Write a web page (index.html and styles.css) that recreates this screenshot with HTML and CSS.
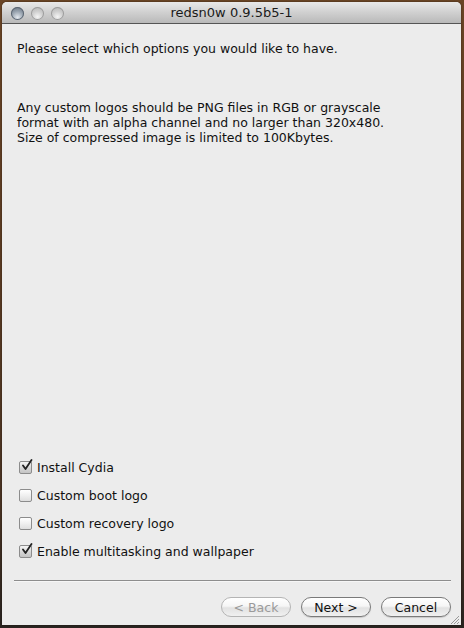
FILE: index.html
```html
<!DOCTYPE html>
<html>
<head>
<meta charset="utf-8">
<link rel="stylesheet" href="styles.css">
</head>
<body>
<div class="window">
  <div class="titlebar">
    <div class="lights">
      <span class="light active"></span>
      <span class="light"></span>
      <span class="light"></span>
    </div>
    <div class="title">redsn0w 0.9.5b5-1</div>
  </div>
  <div class="content">
    <p class="intro">Please select which options you would like to have.</p>
    <p class="info">Any custom logos should be PNG files in RGB or grayscale<br>format with an alpha channel and no larger than 320x480.<br>Size of compressed image is limited to 100Kbytes.</p>
    <div class="options">
      <label class="option"><span class="box checked"><svg viewBox="0 0 13 13" width="13" height="13"><path d="M3 6.5 L5.5 10 L11.5 1" fill="none" stroke="#222" stroke-width="1.8" stroke-linecap="round" stroke-linejoin="round"/></svg></span>Install Cydia</label>
      <label class="option"><span class="box"></span>Custom boot logo</label>
      <label class="option"><span class="box"></span>Custom recovery logo</label>
      <label class="option"><span class="box checked"><svg viewBox="0 0 13 13" width="13" height="13"><path d="M3 6.5 L5.5 10 L11.5 1" fill="none" stroke="#222" stroke-width="1.8" stroke-linecap="round" stroke-linejoin="round"/></svg></span>Enable multitasking and wallpaper</label>
    </div>
    <div class="separator"></div>
    <div class="buttons">
      <button class="btn disabled">&lt; Back</button>
      <button class="btn">Next &gt;</button>
      <button class="btn">Cancel</button>
    </div>
  </div>
  <div class="grip"><svg width="11" height="11" viewBox="0 0 11 11"><path d="M10 2 L2 10 M10 5 L5 10 M10 8 L8 10" stroke="#999" stroke-width="1"/></svg></div>
</div>
</body>
</html>
```
FILE: styles.css
```css
html, body {
  margin: 0;
  padding: 0;
}
body {
  width: 464px;
  height: 628px;
  overflow: hidden;
  background: linear-gradient(180deg, #6a4526 0%, #5b3b22 40%, #4a3423 80%, #2a2420 100%);
  font-family: "DejaVu Sans", "Liberation Sans", sans-serif;
  font-size: 12.5px;
  color: #111;
}
.window {
  position: relative;
  margin: 2px 3px 0 2px;
  width: 459px;
  height: 623px;
  background: #ececec;
  border-radius: 5px 5px 0 0;
  display: flex;
  flex-direction: column;
  overflow: hidden;
  box-shadow: 0 0 2px rgba(0,0,0,0.5);
}
.titlebar {
  height: 21px;
  flex: none;
  background: linear-gradient(180deg, #e9e9e9 0%, #d2d2d2 45%, #b9b9b9 100%);
  border-bottom: 1px solid #555;
  display: flex;
  align-items: center;
  position: relative;
}
.lights {
  display: flex;
  gap: 7px;
  padding-left: 9px;
  padding-top: 1px;
}
.light {
  width: 13px;
  height: 13px;
  border-radius: 50%;
  background: radial-gradient(circle at 50% 75%, #f4f4f4 0%, #d0d0d0 45%, #b0b0b0 100%);
  box-shadow: inset 0 0 0 1px #9c9c9c;
}
.light.active {
  background: radial-gradient(circle at 50% 80%, #e3e8ee 0%, #97a2ae 50%, #5f6a78 100%);
  box-shadow: inset 0 0 0 1px #5a6470;
}
.title {
  position: absolute;
  left: 0;
  right: 0;
  top: 3px;
  text-align: center;
  font-size: 13px;
  color: #1a1a1a;
}
.content {
  flex: 1;
  display: flex;
  flex-direction: column;
  padding: 0 10px 0 15px;
}
.intro {
  margin: 17px 0 0 0;
  line-height: 15px;
}
.info {
  margin: 44px 0 0 0;
  line-height: 15px;
}
.options {
  margin-top: auto;
  display: flex;
  flex-direction: column;
  gap: 14px;
  padding-left: 2px;
}
.option {
  display: flex;
  align-items: center;
  height: 14px;
  gap: 5px;
}
.box {
  width: 13px;
  height: 13px;
  box-sizing: border-box;
  border: 1px solid #8c8c8c;
  border-radius: 2px;
  background: linear-gradient(180deg, #ffffff 0%, #f0f0f0 50%, #dedede 100%);
  position: relative;
}
.box.checked {
  background: linear-gradient(180deg, #f4f4f4 0%, #d4d4d4 60%, #c4c4c4 100%);
}
.box svg {
  position: absolute;
  left: 0;
  top: -3px;
}
.separator {
  margin: 22px 0 0 -3px;
  height: 1px;
  background: #8d8d8d;
  border-bottom: 1px solid #f6f6f6;
}
.buttons {
  display: flex;
  justify-content: flex-end;
  gap: 10px;
  margin-top: 15px;
  margin-bottom: 8px;
}
.btn {
  width: 70px;
  height: 20px;
  padding: 0;
  font-family: inherit;
  font-size: 12.5px;
  color: #111;
  border: 1px solid #7a7a7a;
  border-radius: 10px;
  background: linear-gradient(180deg, #ffffff 0%, #f6f6f6 45%, #e2e2e2 55%, #f0f0f0 100%);
  box-shadow: 0 1px 1px rgba(0,0,0,0.15);
}
.btn.disabled {
  color: #9a9a9a;
  border-color: #b4b4b4;
  box-shadow: none;
}
.grip {
  position: absolute;
  right: 1px;
  bottom: 1px;
  width: 11px;
  height: 11px;
}
```
